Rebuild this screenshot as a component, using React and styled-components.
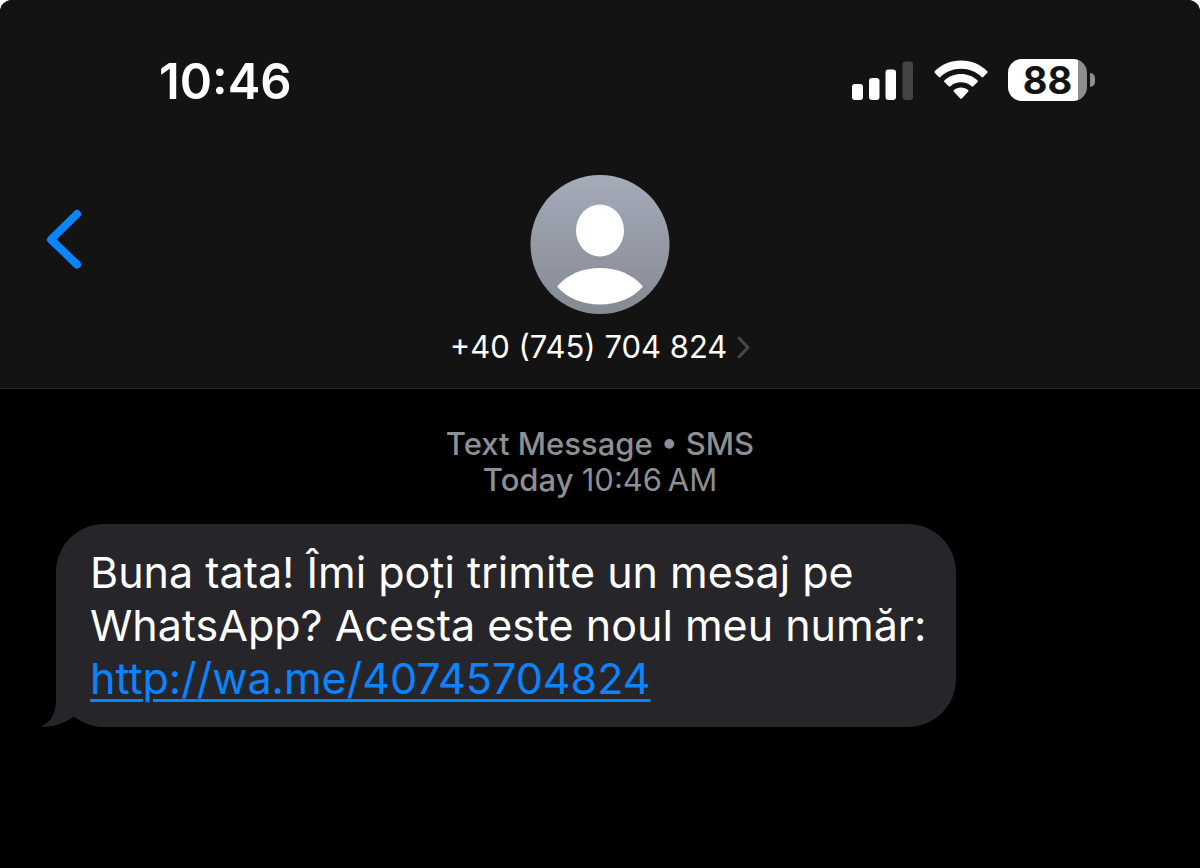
import React from "react";
import styled, { createGlobalStyle } from "styled-components";

const GlobalStyle = createGlobalStyle`
  * {
    box-sizing: border-box;
  }

  body {
    margin: 0;
    background-color: white;
    font-family: Inter, "Liberation Sans", sans-serif;
  }
`;

const Container = styled.div`
  min-height: 100vh;
  display: flex;
  flex-direction: column;
  background-color: black;
  color: white;
  border-radius: 12px 12px 0 0;
  overflow: hidden;
`;

const Header = styled.header`
  background-color: #131313;
  border-bottom: 1px solid #2a2a2b;
`;

const StatusBar = styled.div`
  display: flex;
  align-items: center;
  justify-content: space-between;
  padding: 57px 105px 0 159px;
`;

const Time = styled.time`
  padding-top: 4px;
  font-size: 49px;
  line-height: 42px;
  font-weight: 600;
`;

const StatusIcons = styled.div`
  display: flex;
  align-items: center;
  gap: 20px;
`;

const Battery = styled.div`
  display: flex;
  align-items: center;
  gap: 3px;
`;

const BatteryBody = styled.div`
  width: 79px;
  height: 42px;
  border-radius: 14px;
  background: linear-gradient(
    to right,
    white ${(props) => props.$level}%,
    #8e8e8e ${(props) => props.$level}%
  );
  color: #131313;
  font-size: 38px;
  line-height: 43px;
  font-weight: 700;
  text-align: center;
`;

const BatteryTip = styled.div`
  width: 5px;
  height: 14px;
  border-radius: 0 6px 6px 0;
  background-color: #8e8e8e;
`;

const Nav = styled.nav`
  display: grid;
  grid-template-columns: 1fr auto 1fr;
  align-items: start;
  padding: 72px 46px 23px;
`;

const BackButton = styled.button`
  justify-self: start;
  display: flex;
  margin-top: 34px;
  padding: 0;
  border: none;
  background: none;
  cursor: pointer;
`;

const Contact = styled.button`
  display: flex;
  flex-direction: column;
  align-items: center;
  gap: 14px;
  padding: 0;
  border: none;
  background: none;
  color: white;
  font-family: inherit;
  cursor: pointer;
`;

const Phone = styled.span`
  display: flex;
  align-items: center;
  gap: 10px;
  font-size: 31px;
  line-height: 36px;
`;

const Thread = styled.main`
  display: flex;
  flex-direction: column;
  align-items: flex-start;
  padding: 37px 56px;
`;

const Meta = styled.p`
  align-self: center;
  margin: 0 0 26px;
  color: #8e8e93;
  font-size: 31px;
  line-height: 36px;
  font-weight: 500;
  text-align: center;
`;

const Regular = styled.span`
  font-weight: 400;
`;

const Bubble = styled.div`
  position: relative;
  max-width: 100%;
  padding: 22px 30px 22px 34px;
  border-radius: 48px;
  background-color: #26252a;
  font-size: 43px;
  line-height: 53px;
`;

const Tail = styled.svg`
  position: absolute;
  left: -16px;
  bottom: 0;
`;

const Link = styled.a`
  color: #0a84ff;
  text-decoration-thickness: 3px;
  text-underline-offset: 5px;
`;

const Signal = () => (
  <svg width="62" height="40" viewBox="0 0 62 40" fill="white">
    <rect x="0" y="24" width="11" height="16" rx="3" />
    <rect x="17" y="18" width="10.500" height="22" rx="3" />
    <rect x="33.500" y="9.500" width="10.500" height="30.500" rx="3" />
    <rect x="50.500" y="1.500" width="10.500" height="38.500" rx="3" fill="#444444" />
  </svg>
);

const Wifi = () => (
  <svg width="54" height="40" viewBox="0 0 54 40" fill="white">
    <path d="M27 0.5C37.200 0.500 46.500 4.500 53.300 11.200Q54 12 53.300 12.800L49.200 16.900Q48.400 17.600 47.600 16.900C42.200 11.700 35 8.700 27 8.700S11.800 11.700 6.400 16.900Q5.600 17.600 4.800 16.900L0.700 12.800Q0 12 0.700 11.200C7.500 4.500 16.800 0.500 27 0.500Z" />
    <path d="M27 14C33.300 14 39.200 16.400 43.600 20.400Q44.400 21.200 43.600 22L39.200 26.300Q38.400 27 37.600 26.300C34.800 23.700 31.100 22.200 27 22.200S19.200 23.700 16.400 26.300Q15.600 27 14.800 26.300L10.400 22Q9.600 21.200 10.400 20.400C14.800 16.400 20.700 14 27 14Z" />
    <path d="M27 27.500C29.700 27.500 32.200 28.400 34.100 30Q35 30.800 34.100 31.700L27.800 38.600Q27 39.400 26.200 38.600L19.900 31.700Q19 30.800 19.900 30C21.800 28.400 24.300 27.500 27 27.500Z" />
  </svg>
);

const BackIcon = () => (
  <svg width="36" height="60" viewBox="0 0 36 60" fill="none">
    <path
      d="M31 5L5 30.500L31 55.500"
      stroke="#0a84ff"
      strokeWidth="8"
      strokeLinecap="round"
      strokeLinejoin="round"
    />
  </svg>
);

const Avatar = () => (
  <svg width="140" height="140" viewBox="0 0 140 140">
    <defs>
      <linearGradient id="avatar" x1="0" y1="0" x2="0" y2="1">
        <stop offset="0" stopColor="#a5abb9" />
        <stop offset="1" stopColor="#858992" />
      </linearGradient>
    </defs>
    <circle cx="70" cy="69.500" r="69.500" fill="url(#avatar)" />
    <ellipse cx="70" cy="55.500" rx="24" ry="26" fill="white" />
    <path
      d="M27 111.500C38 99 53 93 70 93S102 99 113 111.500C103 123 88 129.500 70 129.500S37 123 27 111.500Z"
      fill="white"
    />
  </svg>
);

const Chevron = () => (
  <svg width="13" height="22" viewBox="0 0 13 22" fill="none">
    <path
      d="M2 2L11 11.500L2 21"
      stroke="#48484a"
      strokeWidth="3"
      strokeLinecap="round"
      strokeLinejoin="round"
    />
  </svg>
);

const App = () => {
  return (
    <>
      <GlobalStyle />
      <Container>
        <Header>
          <StatusBar>
            <Time>10:46</Time>
            <StatusIcons>
              <Signal />
              <Wifi />
              <Battery>
                <BatteryBody $level={88}>88</BatteryBody>
                <BatteryTip />
              </Battery>
            </StatusIcons>
          </StatusBar>
          <Nav>
            <BackButton aria-label="Back">
              <BackIcon />
            </BackButton>
            <Contact>
              <Avatar />
              <Phone>
                +40 (745) 704 824
                <Chevron />
              </Phone>
            </Contact>
          </Nav>
        </Header>
        <Thread>
          <Meta>
            Text Message • SMS
            <br />
            Today <Regular>10:46{"\u202f"}AM</Regular>
          </Meta>
          <Bubble>
            Buna tata! Îmi poți trimite un mesaj pe
            <br />
            WhatsApp? Acesta este noul meu număr:
            <br />
            <Link href="http://wa.me/40745704824">
              http://wa.me/40745704824
            </Link>
            <Tail width="40" height="48" viewBox="0 0 40 48" fill="#26252a">
              <path d="M16 0V20C16 33 12 43 1 47.500C13 49 26 43 34 37.500L30 0Z" />
            </Tail>
          </Bubble>
        </Thread>
      </Container>
    </>
  );
};

export default App;
